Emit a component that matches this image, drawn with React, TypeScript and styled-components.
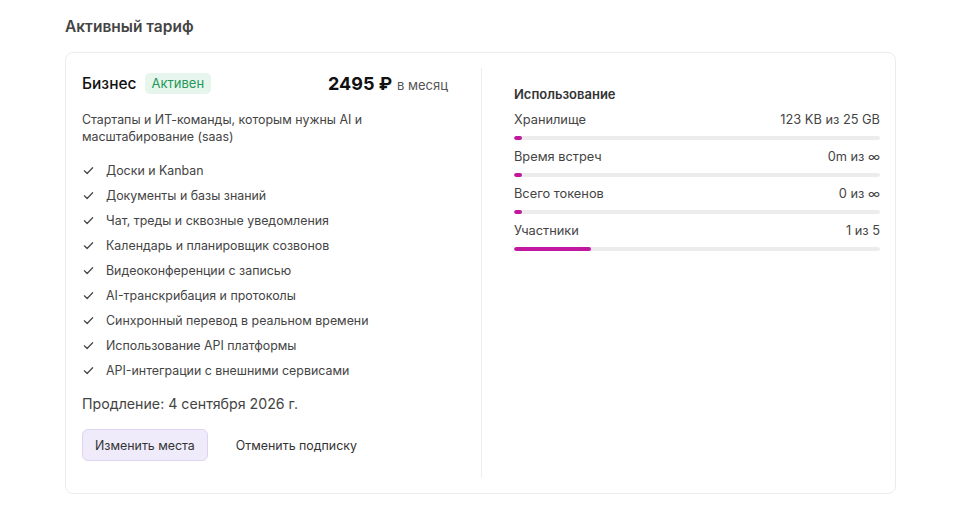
import styled, { createGlobalStyle } from "styled-components";

const GlobalStyle = createGlobalStyle`
  html, body {
    margin: 0;
    padding: 0;
    background: #ffffff;
    font-family: Inter, "Noto Sans", Roboto, sans-serif;
    color: #333;
  }
`;

const Page = styled.div`
  padding: 15px 63px 0 65px;
  width: 959px;
  box-sizing: border-box;
`;

const PageTitle = styled.h2`
  margin: 0 0 13px;
  font-size: 15.5px;
  font-weight: 600;
  color: #444;
  line-height: 24px;
`;

const Card = styled.div`
  border: 1px solid #ececec;
  border-radius: 8px;
  display: grid;
  grid-template-columns: 415px 1fr;
  padding: 15px 0;
  height: 442px;
  box-sizing: border-box;
`;

const Left = styled.div`
  padding: 2px 32px 0 16px;
  display: flex;
  flex-direction: column;
`;

const Right = styled.div`
  border-left: 1px solid #eeeeee;
  padding: 17px 15px 0 32px;
`;

const Header = styled.div`
  display: flex;
  align-items: center;
  width: 366px;
  height: 26px;
`;

const PlanName = styled.span`
  font-size: 15.5px;
  font-weight: 500;
  color: #111;
`;

const Badge = styled.span`
  margin-left: 8px;
  padding: 2px 7px;
  border-radius: 5px;
  background: #e7f6ed;
  color: #23985a;
  font-size: 13px;
  line-height: 17px;
`;

const Price = styled.div`
  margin-left: auto;
  display: flex;
  align-items: baseline;
  gap: 5px;
`;

const Amount = styled.span`
  font-size: 18px;
  font-weight: 700;
  color: #111;
`;

const Period = styled.span`
  font-size: 13px;
  color: #555;
`;

const Description = styled.p`
  margin: 15px 0 13px;
  font-size: 12.4px;
  line-height: 17px;
  color: #444;
`;

const Features = styled.ul`
  list-style: none;
  margin: 0;
  padding: 0;
`;

const Feature = styled.li`
  display: flex;
  align-items: center;
  gap: 12px;
  height: 25px;
  font-size: 12.4px;
  color: #444;
  padding-left: 1px;
`;

const Renewal = styled.div`
  margin-top: 11px;
  font-size: 14.2px;
  color: #444;
  line-height: 20px;
`;

const Actions = styled.div`
  display: flex;
  align-items: center;
  gap: 8px;
  margin-top: 15px;
`;

const Button = styled.button<{ $primary?: boolean }>`
  font-family: inherit;
  font-size: 12.4px;
  height: 32px;
  padding: 0 12px;
  border-radius: 6px;
  cursor: pointer;
  color: #333;
  border: 1px solid ${(p) => (p.$primary ? "#ddd4f1" : "transparent")};
  background: ${(p) => (p.$primary ? "#efebfb" : "transparent")};
  margin-left: ${(p) => (p.$primary ? "0" : "7px")};
`;

const UsageTitle = styled.div`
  font-size: 13px;
  font-weight: 600;
  color: #333;
  line-height: 18px;
  margin-bottom: 8px;
`;

const UsageRow = styled.div`
  margin-bottom: 8px;
`;

const UsageHead = styled.div`
  display: flex;
  justify-content: space-between;
  font-size: 12.8px;
  color: #444;
  line-height: 18px;
  margin-bottom: 7px;
`;

const Track = styled.div`
  height: 4px;
  border-radius: 2px;
  background: #ececec;
  overflow: hidden;
`;

const Fill = styled.div`
  height: 100%;
  min-width: 8px;
  border-radius: 2px;
  background: #c0189e;
`;

const Check = () => (
  <svg width="11" height="11" viewBox="0 0 12 12" fill="none">
    <path d="M1.5 6.3l3 3 6-6.3" stroke="#444" strokeWidth="1.3" strokeLinecap="round" strokeLinejoin="round" />
  </svg>
);

const features = [
  "Доски и Kanban",
  "Документы и базы знаний",
  "Чат, треды и сквозные уведомления",
  "Календарь и планировщик созвонов",
  "Видеоконференции с записью",
  "AI-транскрибация и протоколы",
  "Синхронный перевод в реальном времени",
  "Использование API платформы",
  "API-интеграции с внешними сервисами",
];

const usage = [
  { label: "Хранилище", value: "123 KB из 25 GB", pct: 0 },
  { label: "Время встреч", value: "0m из ∞", pct: 0 },
  { label: "Всего токенов", value: "0 из ∞", pct: 0 },
  { label: "Участники", value: "1 из 5", pct: 21 },
];

export default function App() {
  return (
    <>
      <GlobalStyle />
      <Page>
        <PageTitle>Активный тариф</PageTitle>
        <Card>
          <Left>
            <Header>
              <PlanName>Бизнес</PlanName>
              <Badge>Активен</Badge>
              <Price>
                <Amount>2495 ₽</Amount>
                <Period>в месяц</Period>
              </Price>
            </Header>
            <Description>
              Стартапы и ИТ-команды, которым нужны AI и
              <br />
              масштабирование (saas)
            </Description>
            <Features>
              {features.map((f) => (
                <Feature key={f}>
                  <Check />
                  {f}
                </Feature>
              ))}
            </Features>
            <Renewal>Продление: 4 сентября 2026 г.</Renewal>
            <Actions>
              <Button $primary>Изменить места</Button>
              <Button>Отменить подписку</Button>
            </Actions>
          </Left>
          <Right>
            <UsageTitle>Использование</UsageTitle>
            {usage.map((u) => (
              <UsageRow key={u.label}>
                <UsageHead>
                  <span>{u.label}</span>
                  <span>{u.value}</span>
                </UsageHead>
                <Track>
                  <Fill style={{ width: `${u.pct}%` }} />
                </Track>
              </UsageRow>
            ))}
          </Right>
        </Card>
      </Page>
    </>
  );
}
